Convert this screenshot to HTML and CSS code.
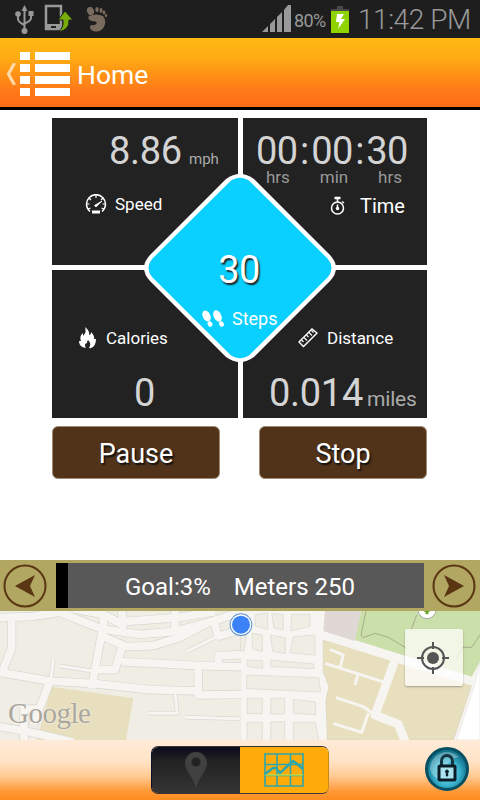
FILE: index.html
```html
<!DOCTYPE html>
<html lang="en">
<head>
    <meta charset="UTF-8">
    <meta name="viewport" content="width=device-width, initial-scale=1.0">
    <title>Home</title>
    <link rel="stylesheet" href="styles.css">
</head>
<body>
    <div class="status-bar">
        <svg class="usb" width="20" height="32" viewBox="0 0 20 32" fill="none" stroke="#999" stroke-width="2">
            <path d="M9.500 6v21M3 12v4q0 3 6.500 6M16 9v6q0 3-6.500 5.500"/>
            <path d="M6.500 8l3-6 3 6z" fill="#999" stroke="none"/>
            <circle cx="9.500" cy="28" r="3" fill="#999" stroke="none"/>
            <circle cx="3" cy="11" r="2.800" fill="#999" stroke="none"/>
            <path d="M13.500 8h5v5h-5z" fill="#999" stroke="none"/>
        </svg>
        <svg class="phone" width="30" height="30" viewBox="0 0 30 30">
            <path d="M2 2h15v23H2z" fill="none" stroke="#999" stroke-width="2.500"/>
            <path d="M1 20h17v6H1z" fill="#999"/>
            <path d="M7 22h5v2H7z" fill="#222"/>
            <path d="M21 7l8 9h-4q1 10-11 12 6-4 5-12h-5z" fill="#76ad0b" stroke="#1e1e1e"/>
        </svg>
        <svg class="foot" width="22" height="26" viewBox="0 0 22 26" fill="#796b5e">
            <ellipse cx="4.500" cy="5" rx="3.400" ry="4.200" transform="rotate(-25 4.500 5)"/>
            <ellipse cx="11" cy="3.500" rx="1.700" ry="2.500"/>
            <ellipse cx="15" cy="4.500" rx="1.500" ry="2.400"/>
            <ellipse cx="18" cy="6.500" rx="1.400" ry="2.100"/>
            <ellipse cx="20" cy="9.500" rx="1.200" ry="1.800"/>
            <path d="M3 10q7-3 14 0 4 5 1 11-4 6-11 4-5-3-2-6 4 1 6-2-1-2-5-2-5-1-3-5z"/>
        </svg>
        <svg class="signal" width="29" height="28" viewBox="0 0 29 28" fill="#999">
            <path d="M0 27l6-6v6zM8 27v-8l5-5v13zM15 27V12l5-5v20zM22 27V5l4-5h3v27z"/>
        </svg>
        <span class="percent">80%</span>
        <svg class="battery" width="18" height="27" viewBox="0 0 18 27">
            <path d="M6 0h6v3h6v3H0V3h6z" fill="#484848"/>
            <path d="M0 5h18v22H0z" fill="#8fd400"/>
            <path d="M6 8h7l-3 5h4l-7 10 1.500-7H5z" fill="#fff"/>
        </svg>
        <span class="clock">11:42 PM</span>
    </div>

    <div class="header">
        <svg class="back" width="10" height="22" viewBox="0 0 10 22"><path d="M8.500 0L2.500 11 8.500 22" fill="none" stroke="#ffd8a8" stroke-width="3.200"/></svg>
        <svg class="list" width="50" height="44" viewBox="0 0 50 44" fill="#fff">
            <path d="M0 0h10v8H0zM15 0h35v8H15zM0 12h10v8H0zM15 12h35v8H15zM0 24h10v8H0zM15 24h35v8H15zM0 36h10v8H0zM15 36h35v8H15z"/>
        </svg>
        <h1>Home</h1>
    </div>

    <div class="main">
        <div class="stats">
            <div class="cell speed">
                <div class="value">8.86 <small>mph</small></div>
                <div class="label">
                    <svg width="22" height="20" viewBox="0 0 22 20" fill="none" stroke="#fff" stroke-width="1.500">
                        <path d="M5 17.500A9.500 9.500 0 1 1 17 17.500"/>
                        <path d="M11 1v3M4 4l2 2M18 4l-2 2M1.500 10h3M17.500 10h3M3 15l2.500-1M19 15l-2.500-1" stroke-width="1.200"/>
                        <path d="M9.500 11.500L17 7l-6 6z" fill="#fff" stroke-width=".8"/>
                        <path d="M7 18h8" stroke-width="3"/>
                    </svg>
                    Speed
                </div>
            </div>
            <div class="cell time">
                <div class="value">00<i>:</i>00<i>:</i>30</div>
                <div class="units"><span>hrs</span><span>min</span><span>hrs</span></div>
                <div class="label">
                    <svg width="16" height="20" viewBox="0 0 16 20" fill="none" stroke="#fff" stroke-width="1.500">
                        <circle cx="7.500" cy="12" r="6"/>
                        <path d="M7.500 6V3M7.500 8.500V12M12 5.500l2 1.500"/>
                        <path d="M4.500 2h6" stroke-width="2.500"/>
                        <circle cx="7.500" cy="12.500" r="1" fill="#fff"/>
                    </svg>
                    Time
                </div>
            </div>
            <div class="cell calories">
                <div class="label">
                    <svg width="18" height="22" viewBox="0 0 18 22" fill="#fff">
                        <path d="M7 0q5 4 4 8 2 0 2-3 4 4 3 7l2 0q0 7-5 9-3 1-1-2 1-3-2-6-1 1-1 3l-2 1q0 3 1 4-7-1-7-7l2 0q-2-5 2-8l0 3Q9 5 7 0z"/>
                    </svg>
                    Calories
                </div>
                <div class="value">0</div>
            </div>
            <div class="cell distance">
                <div class="label">
                    <svg width="20" height="20" viewBox="0 0 20 20" fill="none" stroke="#fff" stroke-width="1.400">
                        <path d="M1 14L14 1l5 4L5.500 18.500z"/>
                        <path d="M3.500 12l2 2M6 9.500l3 3M8.500 7l2 2M11 4.500l3 3M13.500 2.500l2 2" stroke-width="1.100"/>
                    </svg>
                    Distance
                </div>
                <div class="value">0.014 <small>miles</small></div>
            </div>
            <div class="steps">
                <svg class="diamond" width="196" height="192" viewBox="0 0 196 192">
                    <path d="M84 7Q98-3 112 7L188 83Q200 96 188 109L112 185Q98 195 84 185L8 109Q-4 96 8 83z" fill="#fff"/>
                    <path d="M88 9.500Q98 2 108 9.500L186 87Q193 96 186 105L108 182.500Q98 190 88 182.500L10 105Q3 96 10 87z" fill="#09d0ff"/>
                </svg>
                <div class="count">30</div>
                <div class="steps-label">
                    <svg width="24" height="18" viewBox="0 0 24 18" fill="#fff">
                        <ellipse cx="5.500" cy="6" rx="3.800" ry="5.800" transform="rotate(-25 5.500 6)"/>
                        <ellipse cx="9" cy="14" rx="2.300" ry="2.800" transform="rotate(-25 9 14)"/>
                        <ellipse cx="16.500" cy="6" rx="3.800" ry="6" transform="rotate(-25 16.500 6)"/>
                        <ellipse cx="20.500" cy="14" rx="2.300" ry="2.800" transform="rotate(-25 20.500 14)"/>
                    </svg>
                    Steps
                </div>
            </div>
        </div>
        <div class="buttons">
            <button>Pause</button>
            <button>Stop</button>
        </div>
    </div>

    <div class="goal">
        <svg width="44" height="44" viewBox="0 0 44 44"><circle cx="22" cy="22" r="20.500" fill="none" stroke="#5a3612" stroke-width="2"/><path d="M12 22L32 11l-5 11 5 11z" fill="#5a3612"/></svg>
        <div class="progress"><span>Goal:3%</span><span>Meters 250</span></div>
        <svg width="44" height="44" viewBox="0 0 44 44"><circle cx="22" cy="22" r="20.500" fill="none" stroke="#5a3612" stroke-width="2"/><path d="M32 22L12 11l5 11-5 11z" fill="#5a3612"/></svg>
    </div>

    <div class="map">
        <svg width="480" height="129" viewBox="0 18 1440 387">
            <defs>
                <g id="wide">
                    <path d="M0 38L100 34 180 22 305 72 420 88 520 80 640 48 730 18"/>
                    <path d="M200 8L310 28 370 60 365 18M310 28V80M525 10V80M370 50L530 38M640 40L655 100M530 38L645 20"/>
                    <path d="M35 35V130L8 198"/>
                    <path d="M0 202L150 228 285 236 450 254 600 258"/>
                    <path d="M308 70L275 250"/>
                    <path d="M310 95L380 125 460 122 540 97 620 55M650 95L740 70"/>
                    <path d="M290 194H345L365 130M365 170L600 182 740 186"/>
                    <path d="M595 180V270L740 268M655 180V152L740 148"/>
                    <path d="M150 228L100 360M0 365L100 383 220 412"/>
                    <path d="M72 300V405M72 312H125"/>
                </g>
                <g id="narrow">
                    <path d="M160 165L152 225M180 183L290 200M525 260L532 325H445M555 337L720 341M560 140L650 95"/>
                </g>
            </defs>
            <path d="M0 0h730v405H0z" fill="#efede4"/>
            <path d="M155 245L400 280 378 405H110z" fill="#e8dfbe"/>
            <use href="#wide" class="casing"/>
            <use href="#narrow" class="casing thin"/>
            <use href="#wide" class="road"/>
            <use href="#narrow" class="road thin"/>

            <path d="M724 0h716v405H724z" fill="#f7f5f2"/>
            <g class="blocks">
                <path d="M722 90h18l-8 48h-10zM765 30l38-7v50l-38-10zM815 25l35 4v45l-28-5zM875 28h55v36l-58 14zM757 85l30 5v50l-30-8zM811 90l45 8v48l-38-8zM880 95l65-5v60l-75-6zM742 165l46 2v23l-46-5zM812 165l130 12v14l-130-6zM741 210l215 8 6 43-223-10z"/>
                <path d="M741 280h46v46h-46zM812 280h42v47h-42zM880 283l67 8v38l-67-4zM741 352h46v65h-46zM812 350h42v65h-42zM880 352h66l12 60h-78z"/>
            </g>
            <path d="M975 10h110l-20 100-95-30z" fill="#dfd8d5"/>
            <path d="M1085 10h355v160l-25 45-350-110z" fill="#cbdfaa"/>
            <path d="M1098 18L1083 90 1090 98 1125 85 1165 97 1220 130M1250 30L1232 78M1370 160L1387 127H1415L1440 90" fill="none" stroke="#92927a" stroke-width="2"/>
            <path d="M970 105L1190 167 1415 240 1360 405H1210L1197 370 1140 350 1085 405H982L978 285 987 245 970 200z" fill="#e8dfbe" stroke="#d7d2bd" stroke-width="2"/>
            <path d="M1085 405L1140 350 1197 370 1225 405z" fill="#e8dfbe"/>
            <path d="M960 88L1190 160 1425 232" class="road" stroke-width="24"/>
            <path d="M1187 160L1125 330 1195 358 1220 420" class="road" stroke-width="26"/>
            <path d="M990 133L1030 150 1020 190M975 175L1155 232M1075 205L1065 240M1008 278L1090 305 1125 330M1105 325L1085 382 1000 355" class="road" stroke-width="9"/>
            <path d="M1440 170L1425 235 1370 405h70z" fill="#fff" stroke="#e6e3df" stroke-width="2"/>
            <circle cx="1281" cy="14" r="27" fill="#fff" stroke="#aaa" stroke-width="3"/>
            <path d="M1264 14h34l-13 8v6h-8v-6z" fill="#5fa61c"/>
            <circle cx="723" cy="59" r="34" fill="#5d93cf"/>
            <circle cx="723" cy="59" r="31" fill="#fff"/>
            <circle cx="723" cy="59" r="27" fill="#3c82f7"/>
        </svg>
        <span class="logo">Google</span>
        <div class="locate">
            <svg width="32" height="32" viewBox="0 0 32 32" fill="none" stroke="#555" stroke-width="2"><circle cx="16" cy="16" r="11"/><circle cx="16" cy="16" r="6" fill="#555" stroke="none"/><path d="M16 0v7M16 25v7M0 16h7M25 16h7"/></svg>
        </div>
    </div>

    <div class="footer">
        <div class="toggle">
            <div class="pin"><svg width="22" height="37" viewBox="0 0 22 37"><path d="M11 0a11 11 0 0 1 11 11c0 9-9 14-11 26C9 25 0 20 0 11A11 11 0 0 1 11 0z" fill="#414141"/><circle cx="11" cy="10" r="4.500" fill="#222"/></svg></div>
            <div class="chart"><svg width="40" height="34" viewBox="0 0 40 34" fill="none" stroke="#2ba6ad" stroke-width="1.600"><path d="M1 1h38v32H1zM13 1v32M26.500 1v32M1 11.500h38M1 22.500h38"/><path d="M1 22h38" stroke="#e8ef2a" stroke-width="1"/><path d="M1 21L9 15l3 0 4 5 13-12 3 2 7 6" stroke-width="2.500"/></svg></div>
        </div>
        <svg class="lock" width="46" height="46" viewBox="0 0 46 46">
            <defs><radialGradient id="ball" cy=".6"><stop offset="0" stop-color="#8fe0f0"/><stop offset=".6" stop-color="#3ab4cf"/><stop offset="1" stop-color="#14758e"/></radialGradient></defs>
            <circle cx="23" cy="23" r="20.500" fill="url(#ball)" stroke="#075064" stroke-width="3"/>
            <path d="M6 23a17 17 0 0 1 29-12Q22 13 17 34 8 32 6 23z" fill="#fff" opacity=".3"/>
            <path d="M17.500 20v-5a5.500 5.500 0 0 1 11 0v5" fill="none" stroke="#133441" stroke-width="3"/>
            <rect x="15" y="20" width="16" height="14" rx="1" fill="#a9e4ef" stroke="#0b1e28" stroke-width="3"/>
            <path d="M23 24a1.500 1.500 0 0 1 .7 2.800V30h-1.400v-3.200A1.500 1.500 0 0 1 23 24z" fill="#0b1e28" stroke="#0b1e28"/>
        </svg>
    </div>
</body>
</html>
```
FILE: styles.css
```css
* {
    margin: 0;
    padding: 0;
    box-sizing: border-box;
    font-family: Roboto, sans-serif;
}

body {
    width: 480px;
    height: 800px;
    background: #fff;
    display: flex;
    flex-direction: column;
    overflow: hidden;
}

svg {
    display: block;
    flex-shrink: 0;
}

.status-bar {
    height: 38px;
    background: #1e1e1e;
    color: #999;
    display: flex;
    align-items: center;
    padding: 0 9px 0 15px;
    white-space: nowrap;
}

.phone {
    margin-left: 9px;
}

.foot {
    margin-left: 12px;
}

.signal {
    margin-left: auto;
}

.percent {
    font-size: 18px;
    letter-spacing: -0.6px;
    margin: 2px 5px 0 3px;
    width: 32px;
}

.clock {
    width: 113px;
    font-size: 28px;
    font-weight: 300;
    letter-spacing: -0.45px;
    margin-left: 9px;
}

.header {
    height: 72px;
    border-bottom: 3px solid #000;
    background: linear-gradient(#ffb914 0%, #ffac14 28%, #ff7a18 75%, #ff6b18 100%);
    display: flex;
    align-items: center;
    padding: 2px 0 0 6px;
}

.list {
    margin-left: 4px;
}

h1 {
    color: #fff;
    font-size: 26.5px;
    font-weight: 400;
    margin: 2px 0 0 7px;
}

.main {
    height: 450px;
    padding: 8px 53px 0 52px;
}

.stats {
    position: relative;
    height: 300px;
    display: grid;
    grid-template-columns: 186px 184px;
    grid-template-rows: 147px 148px;
    gap: 5px;
}

.cell {
    background: #222;
    color: #fff;
    overflow: hidden;
}

.value {
    color: #d4d4d4;
    font-size: 38px;
    line-height: 44px;
    white-space: nowrap;
}

.value small {
    color: #aaa;
    line-height: 20px;
}

.label {
    display: flex;
    align-items: center;
    font-size: 17px;
    line-height: 22px;
}

.speed {
    padding: 11px 0 0 57px;
}

.speed .value {
    letter-spacing: -0.3px;
}

.speed small {
    font-size: 15px;
    letter-spacing: 0;
    margin-left: -2px;
}

.speed .label {
    margin: 20px 0 0 -24px;
    gap: 8px;
}

.time {
    padding: 11px 0 0 13px;
}

.time .value {
    letter-spacing: -0.6px;
}

.time i {
    font-style: normal;
    margin: 0 2.5px;
}

.units {
    display: flex;
    justify-content: space-between;
    width: 136px;
    margin-left: 10px;
    color: #999;
    font-size: 17px;
    line-height: 20px;
    margin-top: -6px;
}

.time .label {
    font-size: 20px;
    margin: 8px 0 0 74px;
    gap: 14px;
}

.calories {
    padding: 57px 0 0 26px;
}

.calories .label {
    gap: 10px;
}

.calories .value {
    margin: 22px 0 0 56px;
}

.distance {
    padding: 57px 0 0 26px;
}

.distance .label {
    margin-left: 29px;
    gap: 9px;
}

.distance .value {
    margin-top: 22px;
    letter-spacing: -0.3px;
}

.distance small {
    font-size: 21px;
    letter-spacing: -0.2px;
    margin-left: -5px;
}

/* sits on top of the four cells */
.steps {
    position: absolute;
    left: 90px;
    top: 54px;
    width: 196px;
    height: 192px;
    color: #fff;
}

.diamond {
    position: absolute;
    left: 0;
    top: 0;
}

.count {
    position: relative;
    padding: 76px 2px 0 0;
    text-align: center;
    font-size: 38px;
    letter-spacing: -0.5px;
    line-height: 44px;
    text-shadow: 1.5px 1.5px 1.5px #222;
}

.steps-label {
    position: relative;
    display: flex;
    align-items: center;
    gap: 7px;
    font-size: 18px;
    line-height: 22px;
    margin: 16px 0 0 59px;
}

.buttons {
    display: flex;
    justify-content: space-between;
    margin-top: 8px;
}

button {
    width: 168px;
    height: 53px;
    border: 1px solid #a08c76;
    border-radius: 6px;
    background: #51331a;
    color: #fff;
    font-size: 27px;
    padding-top: 2px;
    text-shadow: 1.5px 1.5px 1.5px #111;
}

.goal {
    height: 51px;
    background: #b1a662;
    display: flex;
    align-items: center;
    padding: 0 4px 0 3px;
}

.progress {
    flex: 1;
    height: 45px;
    margin: 0 8px 0 9px;
    background: #585858;
    border-left: 12px solid #000;
    color: #fff;
    font-size: 24px;
    display: flex;
    align-items: center;
    justify-content: center;
    gap: 23px;
    white-space: nowrap;
    padding: 2px 12px 0 0;
}

.map {
    position: relative;
    height: 129px;
    overflow: hidden;
}

.casing {
    fill: none;
    stroke: #d9d6cf;
    stroke-width: 27px;
    stroke-linejoin: round;
}

.road {
    fill: none;
    stroke: #f7f5f2;
    stroke-linejoin: round;
}

use.road {
    stroke-width: 23px;
}

use.casing.thin {
    stroke-width: 13px;
}

use.road.thin {
    stroke-width: 9px;
}

.blocks {
    fill: #efede4;
    stroke: #d9d6cf;
    stroke-width: 2px;
}

.logo {
    position: absolute;
    left: 8px;
    top: 85px;
    font-family: "Liberation Serif", serif;
    font-size: 29px;
    line-height: 34px;
    letter-spacing: -0.5px;
    color: #aaa69b;
    text-shadow: 0 0 2px #fff;
}

.locate {
    position: absolute;
    left: 405px;
    top: 18px;
    width: 58px;
    height: 57px;
    display: flex;
    align-items: center;
    justify-content: center;
    background: rgba(255, 255, 255, 0.72);
    border-radius: 2px;
    box-shadow: 0 1px 2px rgba(0, 0, 0, 0.3);
    padding-right: 2px;
}

.footer {
    height: 60px;
    background: linear-gradient(#ffebd9 0%, #ffe3c6 35%, #ffcb94 60%, #ff9a38 85%, #ff8d1f 100%);
    display: flex;
    justify-content: space-between;
    padding: 6px 10px 0 151px;
}

.toggle {
    width: 178px;
    height: 48px;
    display: flex;
    border: 1px solid #3a3434;
    border-left-color: #07112e;
    border-right-color: #c98a1a;
    border-radius: 7px;
    overflow: hidden;
}

.pin,
.chart {
    flex: 1;
    display: flex;
    align-items: center;
    justify-content: center;
}

.pin {
    background: linear-gradient(#090a1c, #222 30%, #353535);
}

.chart {
    background: #ffab09;
}
```
